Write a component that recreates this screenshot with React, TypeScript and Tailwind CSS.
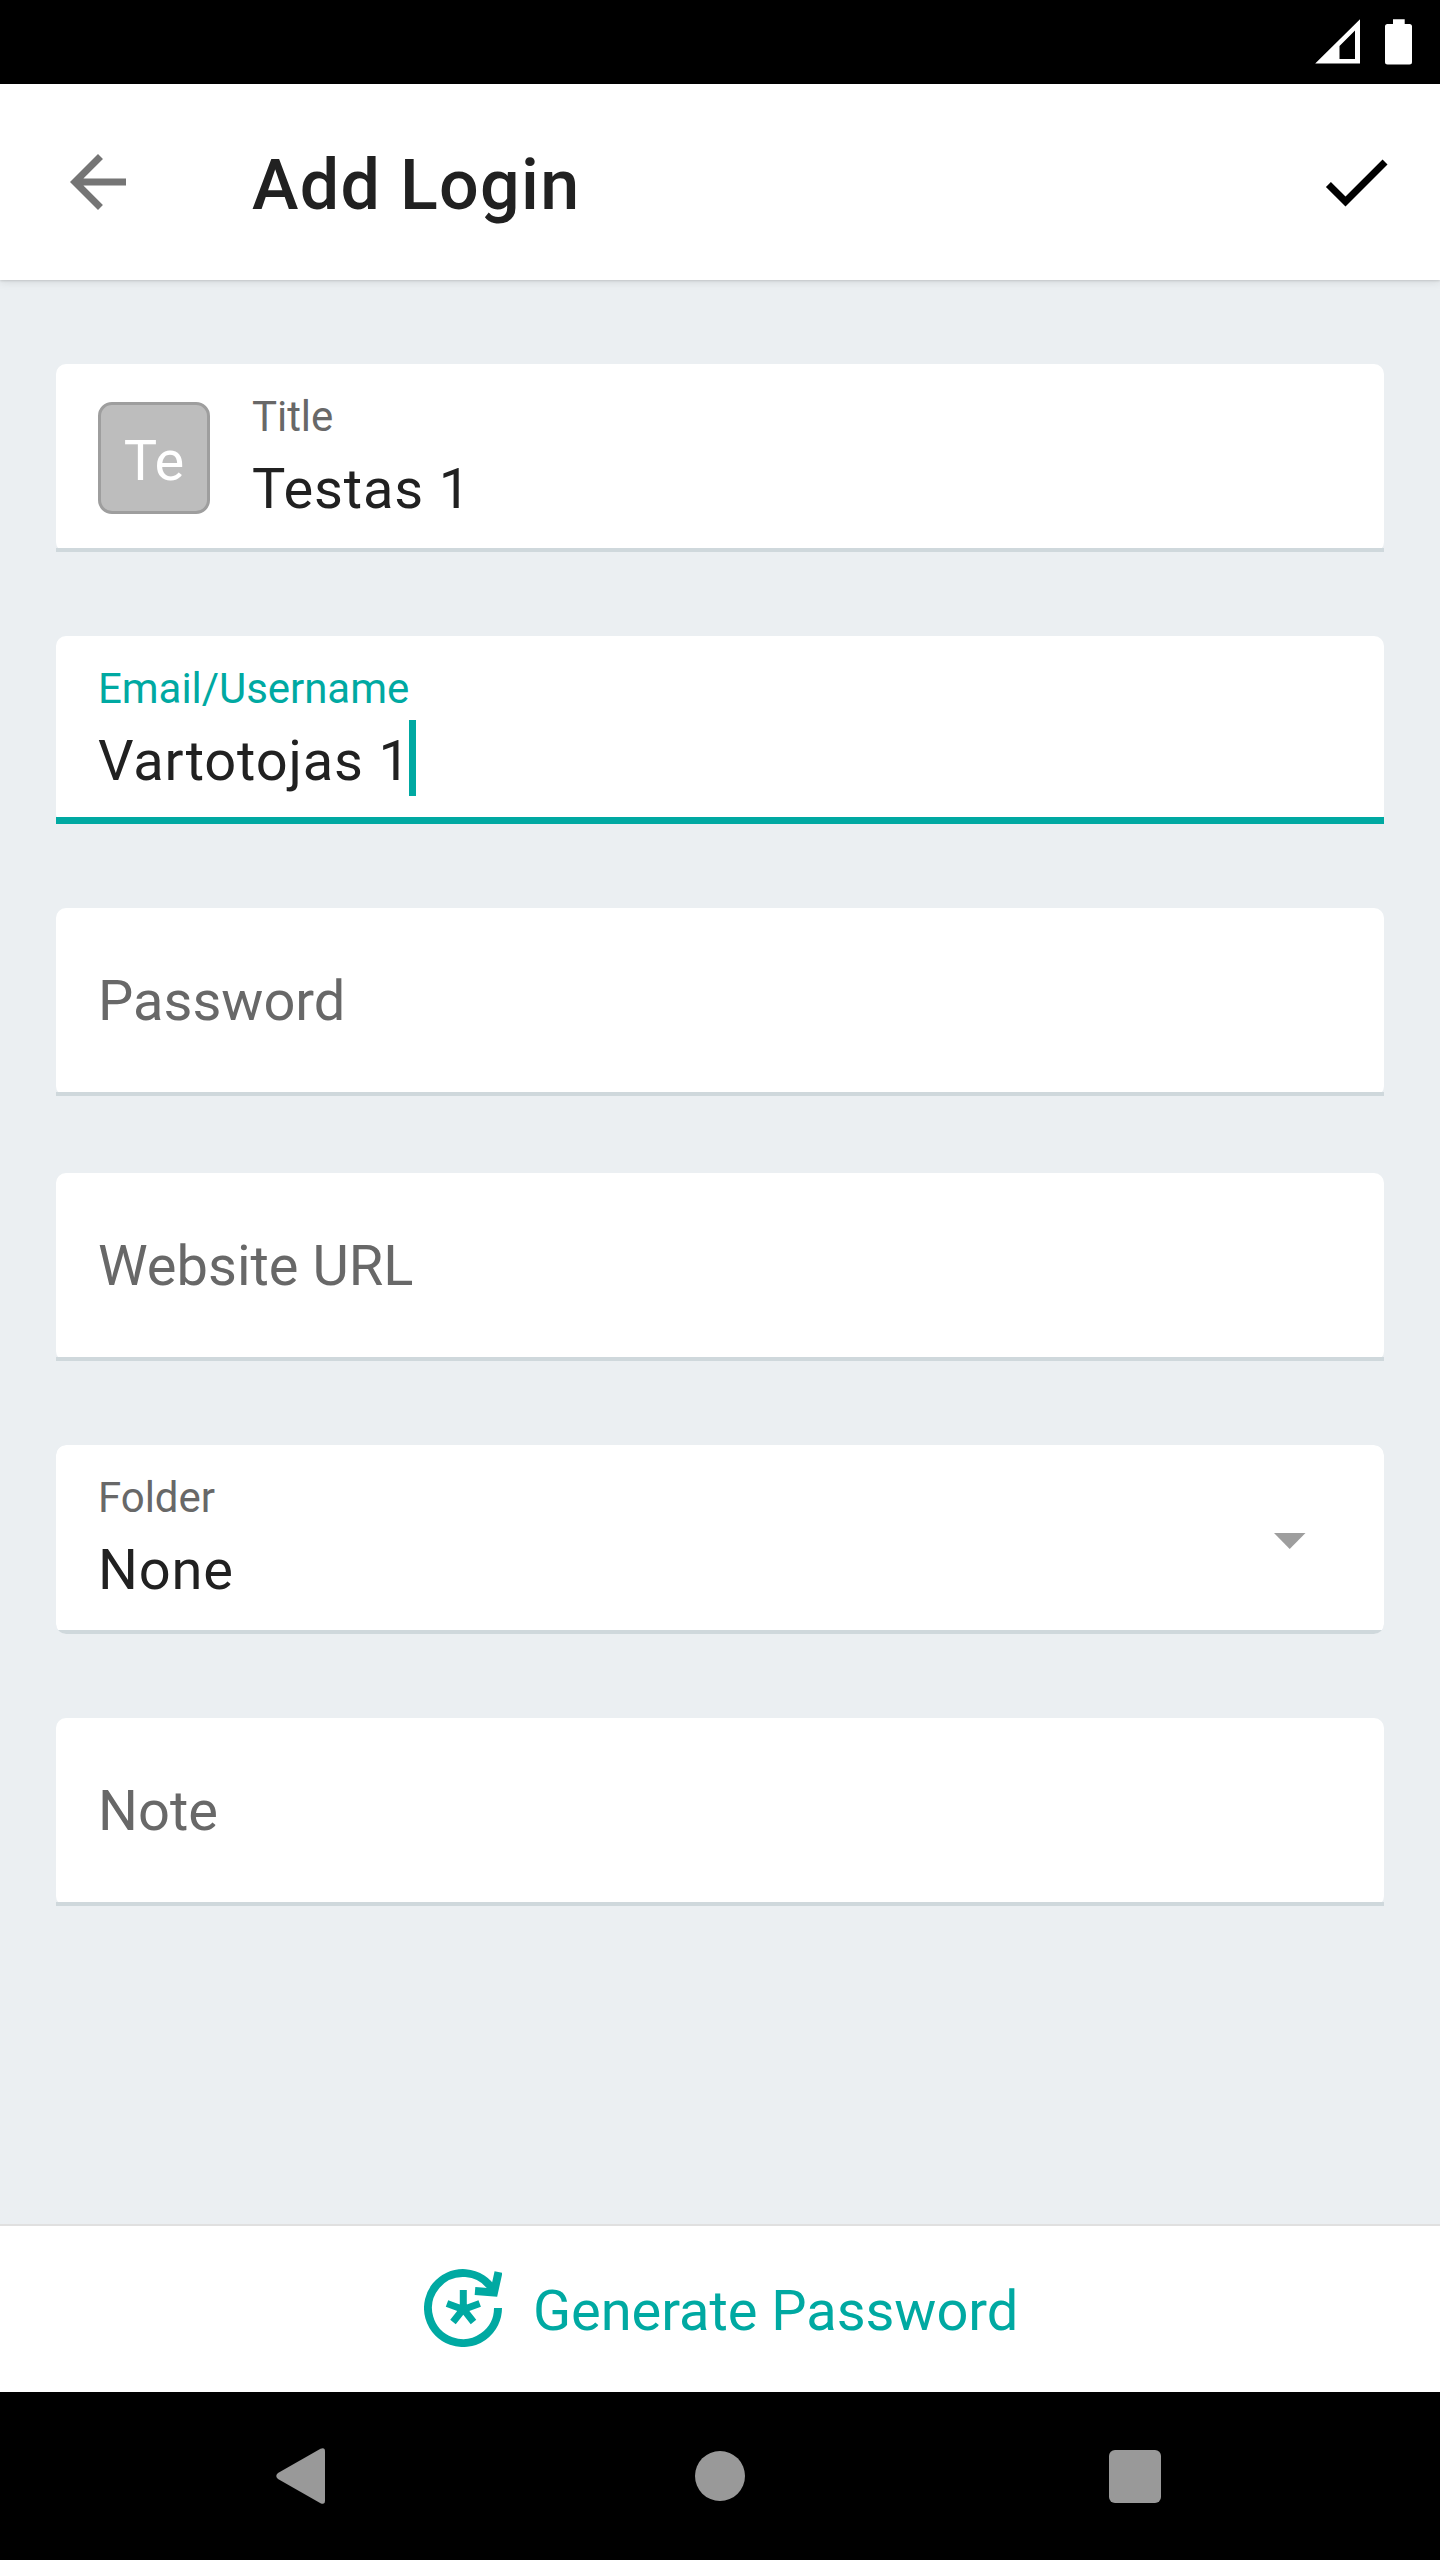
import type { ReactNode } from "react";

function StatusBar() {
  return (
    <div className="flex h-[84px] shrink-0 items-start justify-end bg-black pr-7 pt-[19px]">
      <svg className="mr-[25px] h-[45px] w-[45px]" viewBox="0 0 45 45" fill="#fff">
        <path fillRule="evenodd" d="M0.2 44.6L45 0.2V44.6ZM24.5 40H40V11.6L24.5 27Z" />
      </svg>
      <svg className="h-[46px] w-[27px]" viewBox="0 0 27 46" fill="#fff">
        <path d="M8 0.3H19.7V5H24.5Q27 5 27 7.5V43Q27 45.5 24.5 45.5H2.5Q0 45.5 0 43V7.5Q0 5 2.5 5H8Z" />
      </svg>
    </div>
  );
}

function Header() {
  return (
    <header className="z-10 flex h-[196px] shrink-0 items-start bg-white pl-14 pr-[42px] pt-14 shadow-[0_1px_2px_rgba(0,0,0,0.12),0_3px_8px_rgba(0,0,0,0.08)]">
      <svg className="h-[84px] w-[84px]" viewBox="0 0 24 24" fill="#757575">
        <path d="M20 11H7.83l5.59-5.59L12 4l-8 8 8 8 1.41-1.41L7.83 13H20v-2z" />
      </svg>
      <h1 className="ml-28 mt-1 flex-1 text-[70px] font-medium leading-[82px] tracking-[1.3px] text-[#212121]">Add Login</h1>
      <svg className="h-[84px] w-[84px]" viewBox="0 0 24 24" fill="#000">
        <path d="M9 16.17L4.83 12l-1.42 1.41L9 19 21 7l-1.41-1.41z" />
      </svg>
    </header>
  );
}

function Card({
  children,
  line = "bg-[#cfd8dc] h-1 -mt-1",
  frame = "h-[188px]",
}: {
  children: ReactNode;
  line?: string;
  frame?: string;
}) {
  return (
    <section className={`shrink-0 ${frame}`}>
      <div className="h-full rounded-[10px] bg-white px-[42px]">{children}</div>
      <div className={`relative ${line}`} />
    </section>
  );
}

function Filled({ label, value, active = false }: { label: string; value: string; active?: boolean }) {
  return (
    <div className="pt-[29px]">
      <div className={`text-[42px] leading-[48px] tracking-[-0.05px] ${active ? "text-[#00a9a2]" : "text-[#686868]"}`}>{label}</div>
      <div className="mt-4 flex h-16 items-start">
        <span className="whitespace-pre text-[56px] leading-[64px] tracking-[0.84px] text-[#212121]">{value}</span>
        {active && <span className="-ml-0.5 -mt-[9px] h-[76px] w-[7px] bg-[#00a9a2]" />}
      </div>
    </div>
  );
}

function Placeholder({ text }: { text: string }) {
  return <div className="pt-[61px] text-[56px] leading-[64px] text-[#686868]">{text}</div>;
}

export default function App() {
  return (
    <div className="flex h-[2560px] w-[1440px] flex-col overflow-hidden bg-[#ebeff2] font-['Roboto',sans-serif]">
      <StatusBar />
      <Header />
      <main className="flex flex-1 flex-col px-14 pt-[84px]">
        <Card>
          <div className="flex">
            <div className="mt-[38px] h-28 w-28 shrink-0 rounded-[14px] border-[3px] border-[#9e9e9e] bg-[#bdbdbd] pt-6 text-center text-[56px] leading-[64px] text-white">
              Te
            </div>
            <div className="ml-[42px]">
              <Filled label="Title" value="Testas 1" />
            </div>
          </div>
        </Card>
        <div className="h-[84px] shrink-0" />
        <Card line="bg-[#00a9a2] h-[7px] -mt-[7px]">
          <Filled label="Email/Username" value="Vartotojas 1" active />
        </Card>
        <div className="h-[84px] shrink-0" />
        <Card>
          <Placeholder text="Password" />
        </Card>
        <div className="h-[77px] shrink-0" />
        <Card>
          <Placeholder text="Website URL" />
        </Card>
        <div className="h-[84px] shrink-0" />
        <Card frame="h-[189px] overflow-hidden rounded-[10px]">
          <div className="flex justify-between">
            <Filled label="Folder" value="None" />
            <svg className="mr-9 mt-[88px] h-4 w-8" viewBox="0 0 32 16" fill="#9e9e9e">
              <path d="M0 0H31.500L15.700 16Z" />
            </svg>
          </div>
        </Card>
        <div className="h-[84px] shrink-0" />
        <Card>
          <Placeholder text="Note" />
        </Card>
      </main>
      <footer className="flex h-[168px] shrink-0 items-start border-t-2 border-[#e0e0e0] bg-white pl-[424px] text-[#00a9a2]">
        <svg className="mt-[43px] h-[78px] w-[78px]" viewBox="0 0 78 78" fill="none" stroke="currentColor">
          <path d="M74 39A35 35 0 1 1 69 21" strokeWidth="8" />
          <path d="M74.500 3L70 23.500L51 22" strokeWidth="8" />
          <path d="M39.300 41V21M39.300 40.500L23 34.500M39.300 40.500L55.700 34.500M39.300 40L29 53M39.300 40L49.500 53" strokeWidth="7" />
        </svg>
        <span className="ml-[31px] mt-[53px] whitespace-pre text-[56px] leading-[64px] tracking-[-0.05px]">Generate Password</span>
      </footer>
      <nav className="flex h-[168px] shrink-0 items-center bg-black pl-[276px]">
        <svg className="h-14 w-[49px]" viewBox="0 0 49 56" fill="#999">
          <path d="M44.500 0.800Q49-1 49 3.500V52.500Q49 57 44.500 55.200L2 31Q-1.500 28 2 25Z" />
        </svg>
        <div className="ml-[370px] h-[50px] w-[50px] rounded-full bg-[#999]" />
        <div className="ml-[364px] h-[53px] w-[52px] rounded-[6px] bg-[#999]" />
      </nav>
    </div>
  );
}
